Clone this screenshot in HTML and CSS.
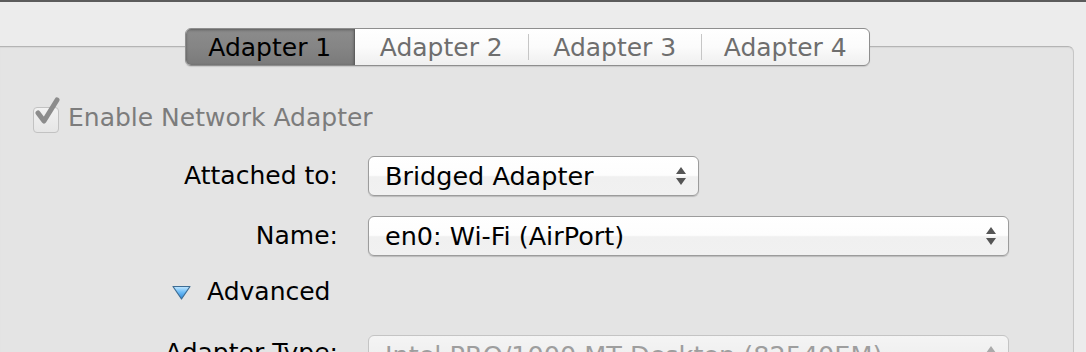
FILE: index.html
```html
<!DOCTYPE html>
<html>
<head>
<meta charset="utf-8">
<link rel="stylesheet" href="styles.css">
</head>
<body>
<div class="topbar"></div>
<div class="tabview">
  <div class="tabs">
    <div class="tab tab-selected">Adapter 1</div>
    <div class="tab">Adapter 2</div>
    <div class="tab tab-divided">Adapter 3</div>
    <div class="tab tab-divided">Adapter 4</div>
  </div>
  <div class="panel">
    <div class="check-row">
      <span class="checkbox">
        <svg class="checkmark" width="30" height="32" viewBox="0 0 30 32">
          <path d="M5 17 L11 25 L24 4" fill="none" stroke="#8c8c8c" stroke-width="5" stroke-linecap="round" stroke-linejoin="round"/>
        </svg>
      </span>
      <span class="check-label">Enable Network Adapter</span>
    </div>
    <div class="form">
      <div class="label">Attached to:</div>
      <div class="popup popup-short">
        <span class="popup-text">Bridged Adapter</span>
        <svg class="arrows" width="12" height="20" viewBox="0 0 12 20"><path d="M6 1 L11 8 L1 8 Z M1 12 L11 12 L6 19 Z" fill="#555"/></svg>
      </div>
      <div class="label">Name:</div>
      <div class="popup popup-long">
        <span class="popup-text">en0: Wi-Fi (AirPort)</span>
        <svg class="arrows" width="12" height="20" viewBox="0 0 12 20"><path d="M6 1 L11 8 L1 8 Z M1 12 L11 12 L6 19 Z" fill="#555"/></svg>
      </div>
      <div class="advanced">
        <svg class="disclosure" width="19" height="15" viewBox="0 0 19 15">
          <defs>
            <linearGradient id="dg" x1="0" y1="0" x2="0" y2="1">
              <stop offset="0" stop-color="#c4e8ff"/>
              <stop offset="0.45" stop-color="#6cbcf7"/>
              <stop offset="1" stop-color="#2a84d6"/>
            </linearGradient>
          </defs>
          <path d="M1 1.5 L18 1.5 L9.5 14 Z" fill="url(#dg)" stroke="#3e6d94" stroke-width="1.2" stroke-linejoin="round"/>
        </svg>
        <span>Advanced</span>
      </div>
      <div class="label label-last">Adapter Type:</div>
      <div class="popup popup-long popup-disabled">
        <span class="popup-text">Intel PRO/1000 MT Desktop (82540EM)</span>
        <svg class="arrows" width="12" height="20" viewBox="0 0 12 20"><path d="M6 1 L11 8 L1 8 Z M1 12 L11 12 L6 19 Z" fill="#aaa"/></svg>
      </div>
    </div>
  </div>
</div>
</body>
</html>
```
FILE: styles.css
```css
html, body {
  margin: 0;
  padding: 0;
}
body {
  width: 1086px;
  height: 352px;
  overflow: hidden;
  background: #ececec;
  font-family: "DejaVu Sans", "Liberation Sans", sans-serif;
  font-size: 25px;
  color: #000;
}
.topbar {
  height: 2px;
  background: #5c5c5c;
}
.tabview {
  padding-top: 26px;
}
.tabs {
  position: relative;
  z-index: 1;
  display: flex;
  margin-left: 185px;
  width: 685px;
  height: 38px;
  box-sizing: border-box;
  border: 1px solid #8e8e8e;
  border-radius: 6px;
  background: linear-gradient(#ffffff 0%, #fbfbfb 50%, #efefef 100%);
  box-shadow: 0 1px 1px rgba(0,0,0,0.12);
  overflow: hidden;
}
.tab {
  display: flex;
  align-items: center;
  justify-content: center;
  width: 174px;
  font-size: 25px;
  color: #6e6e6e;
  position: relative;
}
.tab-selected {
  width: 168px;
  color: #000;
  background: linear-gradient(#8c8c8c 0%, #858585 50%, #7a7a7a 100%);
  box-shadow: inset 0 1px 3px rgba(0,0,0,0.35);
  border-right: 1px solid #5e5e5e;
}
.tab-divided::before {
  content: "";
  position: absolute;
  left: 0;
  top: 5px;
  bottom: 5px;
  width: 1px;
  background: #c6c6c6;
}
.tabs .tab:last-child {
  width: 168px;
}
.panel {
  margin-top: -20px;
  width: 1074px;
  height: 310px;
  box-sizing: border-box;
  border-top: 1px solid #b4b4b4;
  border-right: 1px solid #c6c6c6;
  border-top-right-radius: 6px;
  background: #e4e4e4;
  box-shadow: inset 0 1px 1px rgba(0,0,0,0.06);
}
.check-row {
  display: flex;
  align-items: center;
  margin-top: 55px;
  margin-left: 33px;
  height: 30px;
}
.checkbox {
  position: relative;
  width: 24px;
  height: 24px;
  margin-top: 6px;
  border: 1px solid #c2c2c2;
  border-radius: 4px;
  background: linear-gradient(#f2f2f2, #e6e6e6);
  box-sizing: content-box;
}
.checkmark {
  position: absolute;
  left: -1px;
  top: -12px;
}
.check-label {
  margin-left: 9px;
  color: #7c7c7c;
  font-size: 25px;
}
.form {
  display: grid;
  grid-template-columns: 338px auto;
  column-gap: 30px;
  row-gap: 20px;
  margin-top: 24px;
  align-items: center;
}
.label {
  justify-self: end;
  font-size: 25px;
  line-height: 40px;
}
.label-last {
  margin-top: -4px;
}
.popup {
  display: flex;
  align-items: center;
  justify-content: space-between;
  height: 40px;
  box-sizing: border-box;
  padding: 0 11px 0 16px;
  border: 1px solid #9c9c9c;
  border-radius: 6px;
  background: linear-gradient(#ffffff 0%, #fdfdfd 48%, #f0f0f0 52%, #f1f1f1 100%);
  box-shadow: 0 1px 1px rgba(0,0,0,0.18);
}
.popup-short {
  width: 331px;
}
.popup-long {
  width: 641px;
}
.popup-text {
  font-size: 25.5px;
}
.popup-disabled {
  border-color: #c4c4c4;
  box-shadow: none;
  background: linear-gradient(#f4f4f4, #ebebeb);
}
.popup-disabled .popup-text {
  color: #9e9e9e;
}
.advanced {
  grid-column: 1 / span 2;
  display: flex;
  align-items: center;
  height: 30px;
  padding-left: 172px;
  margin-bottom: 9px;
  font-size: 25px;
}
.disclosure {
  margin-right: 16px;
  margin-top: 2px;
}
```
